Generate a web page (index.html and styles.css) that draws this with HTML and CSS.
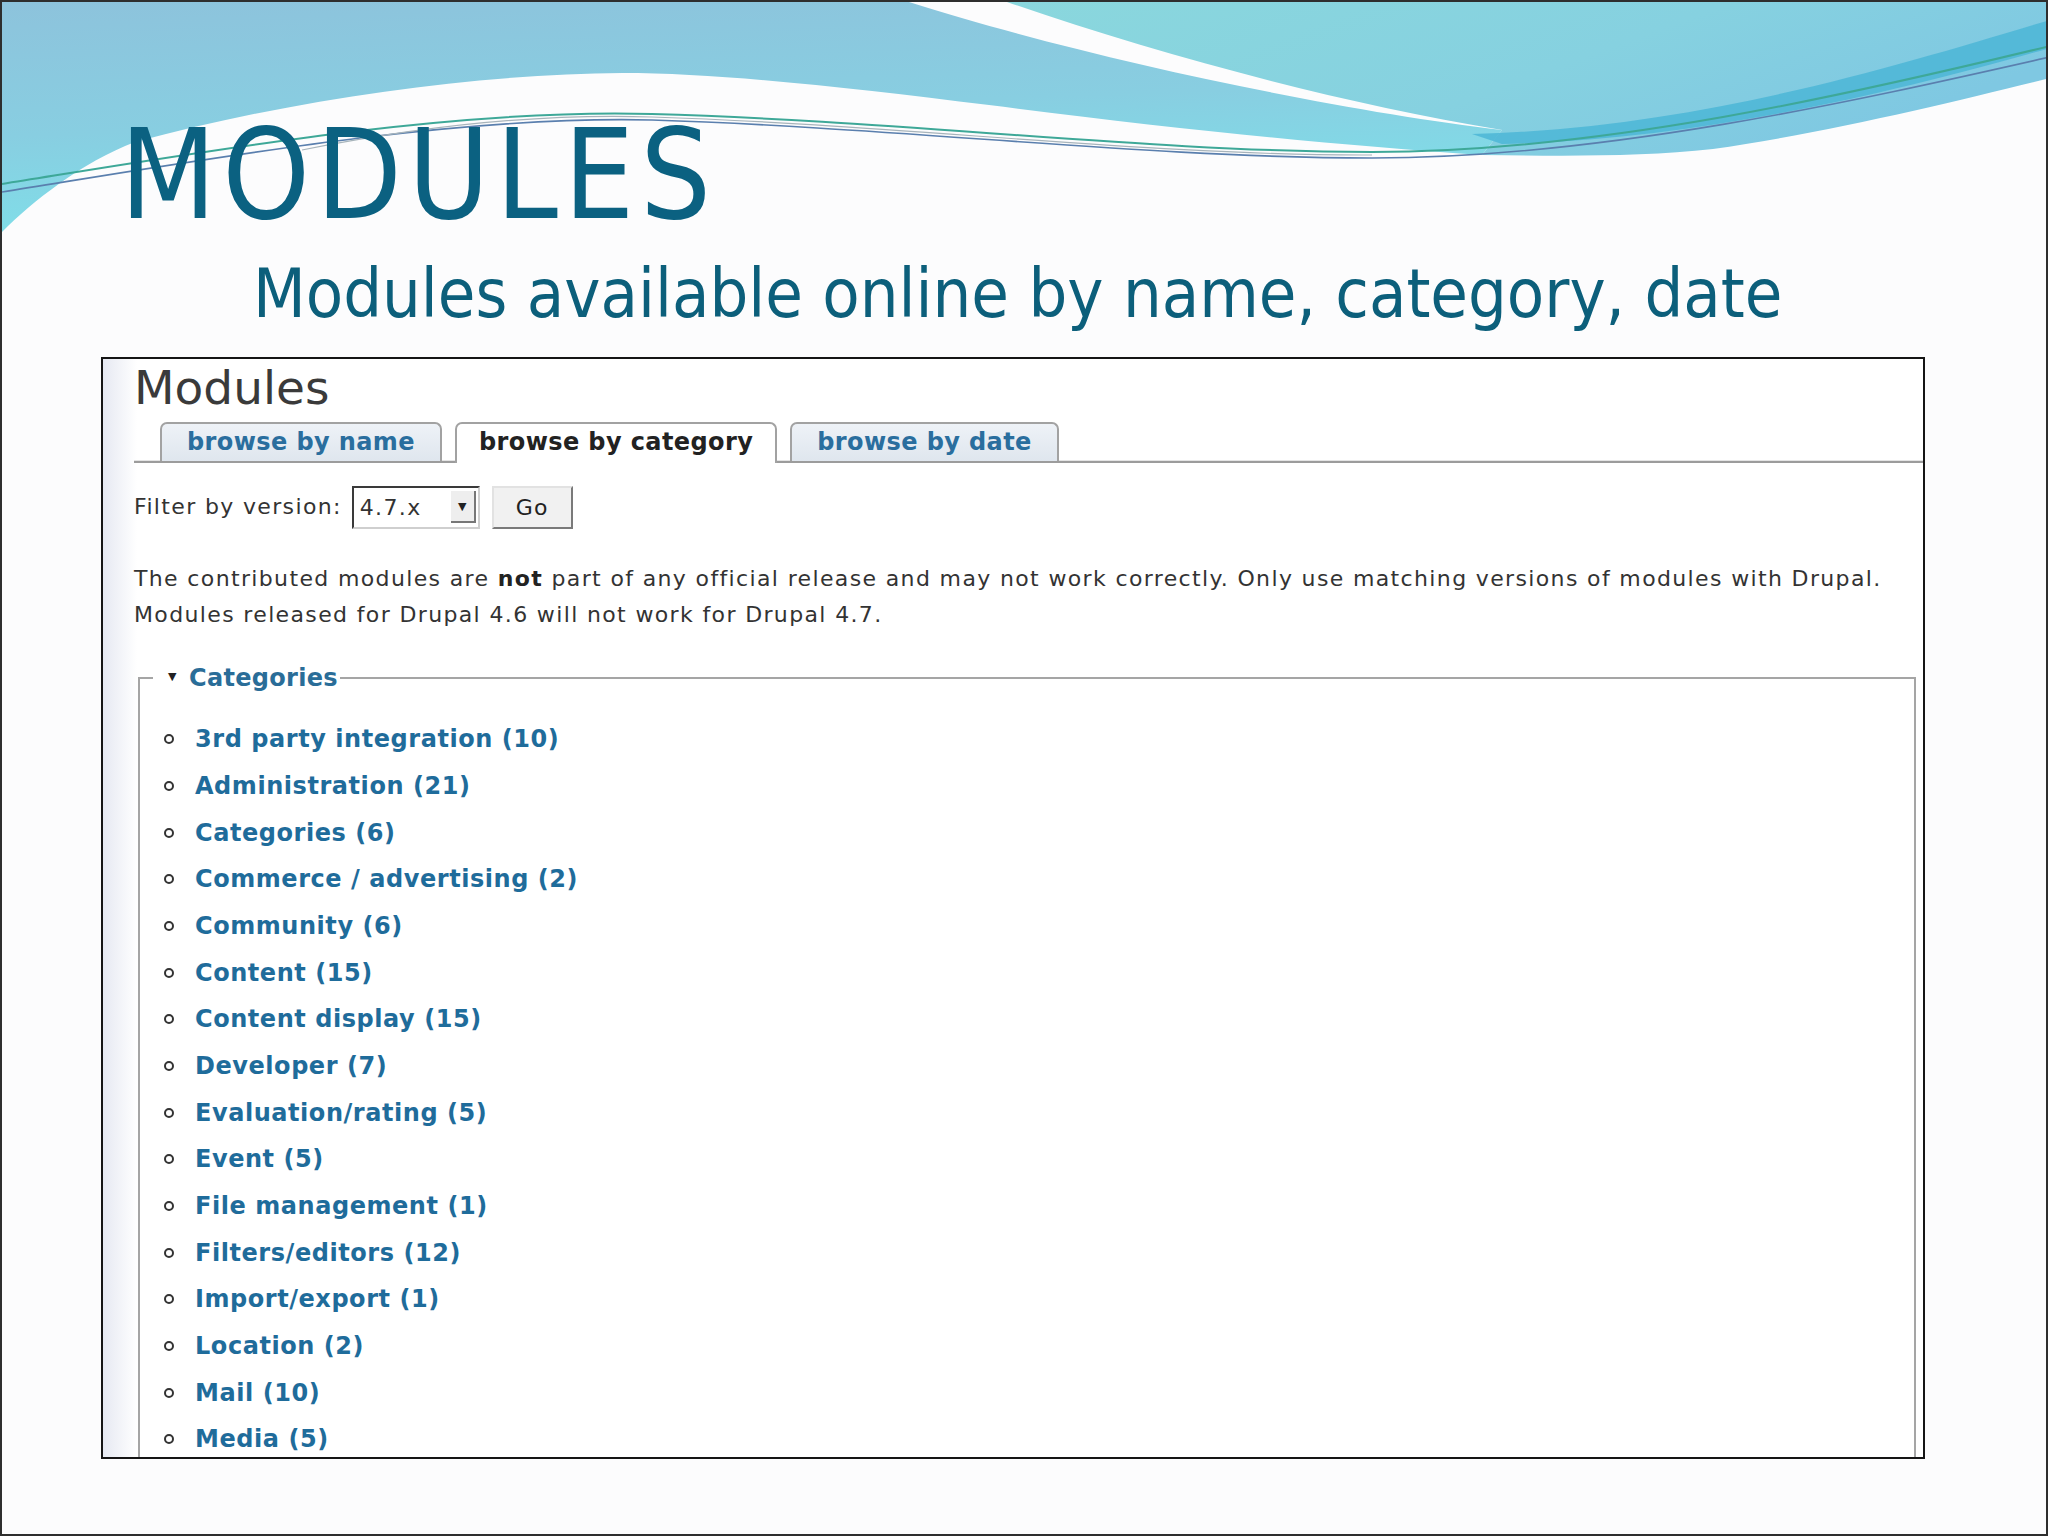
FILE: index.html
```html
<!DOCTYPE html>
<html lang="en">
<head>
<meta charset="utf-8">
<title>Modules</title>
<link rel="stylesheet" href="styles.css">
</head>
<body>
<div class="slide">
  <svg class="deco" width="2048" height="260" viewBox="0 0 2048 260" xmlns="http://www.w3.org/2000/svg" aria-hidden="true">
    <defs>
      <linearGradient id="gA" x1="0" y1="0" x2="0.25" y2="1">
        <stop offset="0" stop-color="#8dc3dc"/>
        <stop offset="0.55" stop-color="#88cee1"/>
        <stop offset="1" stop-color="#7fdfe9"/>
      </linearGradient>
      <linearGradient id="gB" x1="0" y1="0" x2="1" y2="0.4">
        <stop offset="0" stop-color="#8ad7dd"/>
        <stop offset="0.6" stop-color="#86d1e0"/>
        <stop offset="1" stop-color="#7fc8e2"/>
      </linearGradient>
    </defs>
    <path d="M0,0 L907,0 C1080,55 1330,108 1500,128 L1480,153 C1330,143 1173,127 987,103 C850,86 720,71 620,71 C480,72 300,95 133,140 C80,160 30,200 0,230 Z" fill="url(#gA)"/>
    <path d="M1005,0 L2048,0 L2048,76 C1960,98 1820,132 1711,147 C1640,155 1560,154 1480,153 L1500,128 C1330,100 1150,50 1005,0 Z" fill="url(#gB)"/>
    <path d="M1470,132 C1700,126 1900,62 2048,18 L2048,46 C1900,88 1700,138 1500,142 Z" fill="#4cb6d6" opacity="0.85"/>
    <path d="M0,182 C200,150 450,106 650,112 C900,119 1150,150 1370,150 C1600,150 1850,92 2048,44" fill="none" stroke="#3ea898" stroke-width="2"/>
    <path d="M0,190 C200,158 450,113 650,118 C900,126 1150,156 1370,156 C1600,156 1850,100 2048,55" fill="none" stroke="#5a7fae" stroke-width="1.6"/>
    <path d="M300,148 C450,118 560,112 650,115 C900,123 1150,154 1370,153" fill="none" stroke="#a7b4bb" stroke-width="1.2"/>
  </svg>

  <h1 class="title">MODULES</h1>
  <p class="subtitle">Modules available online by name, category, date</p>

  <div class="shot">
    <h2 class="page-title">Modules</h2>
    <ul class="tabs">
      <li class="tab">browse by name</li>
      <li class="tab active">browse by category</li>
      <li class="tab">browse by date</li>
    </ul>
    <div class="filter">
      <span class="filter-label">Filter by version:</span>
      <span class="select"><span class="select-value">4.7.x</span><span class="select-arrow">&#9660;</span></span>
      <span class="button">Go</span>
    </div>
    <p class="notice">The contributed modules are <strong>not</strong> part of any official release and may not work correctly. Only use matching versions of modules with Drupal.<br>Modules released for Drupal 4.6 will not work for Drupal 4.7.</p>
    <fieldset class="cats">
      <legend class="cats-legend"><span class="tri">&#9660;</span>Categories</legend>
      <ul class="cat-list">
        <li>3rd party integration (10)</li>
        <li>Administration (21)</li>
        <li>Categories (6)</li>
        <li>Commerce / advertising (2)</li>
        <li>Community (6)</li>
        <li>Content (15)</li>
        <li>Content display (15)</li>
        <li>Developer (7)</li>
        <li>Evaluation/rating (5)</li>
        <li>Event (5)</li>
        <li>File management (1)</li>
        <li>Filters/editors (12)</li>
        <li>Import/export (1)</li>
        <li>Location (2)</li>
        <li>Mail (10)</li>
        <li>Media (5)</li>
      </ul>
    </fieldset>
  </div>
</div>
</body>
</html>
```

FILE: styles.css
```css
html, body {
  margin: 0;
  padding: 0;
  background: #fcfcfd;
}

.slide {
  position: relative;
  width: 2048px;
  height: 1536px;
  box-sizing: border-box;
  border: 2px solid #2e2e2e;
  overflow: hidden;
  background: #fcfcfd;
  font-family: "DejaVu Sans Condensed", "DejaVu Sans", sans-serif;
}

.deco {
  position: absolute;
  left: 0;
  top: 0;
  z-index: 0;
}

.title {
  position: relative;
  z-index: 1;
  margin: 112px 0 0 0;
  padding-left: 118px;
  font-family: "DejaVu Sans Condensed", "DejaVu Sans", sans-serif;
  font-stretch: condensed;
  font-weight: normal;
  font-size: 124px;
  line-height: 123px;
  letter-spacing: 6px;
  color: #0b6181;
}

.subtitle {
  position: relative;
  z-index: 1;
  margin: 23px 0 0 0;
  padding-left: 251px;
  font-family: "DejaVu Sans Condensed", "DejaVu Sans", sans-serif;
  font-stretch: condensed;
  font-size: 68px;
  line-height: 67px;
  color: #0c5f7b;
}

.shot {
  position: relative;
  z-index: 1;
  margin: 30px 0 0 99px;
  width: 1824px;
  height: 1102px;
  box-sizing: border-box;
  border: 2px solid #151515;
  padding: 1px 7px 0 31px;
  overflow: hidden;
  background: linear-gradient(90deg, #e6e9f2 0, #ffffff 34px);
  font-family: "DejaVu Sans", Verdana, sans-serif;
  color: #333;
}

.page-title {
  margin: 0;
  font-weight: normal;
  font-size: 47px;
  line-height: 56px;
  color: #3a3a3a;
}

.tabs {
  display: flex;
  align-items: flex-end;
  gap: 13px;
  margin: 6px -7px 0 0;
  padding: 0 0 0 26px;
  list-style: none;
  border-bottom: 2px solid #9c9c9c;
  box-shadow: 0 -2px 0 -1px #e4e4e4 inset;
}

.tab {
  height: 37px;
  padding: 0 25px;
  border: 2px solid #a2a2a2;
  border-bottom: none;
  border-radius: 7px 7px 0 0;
  background: linear-gradient(#eef2f7, #dfe6ee);
  font-weight: bold;
  font-size: 24px;
  letter-spacing: 0.4px;
  line-height: 37px;
  color: #2a6e9e;
}

.tab.active {
  height: 39px;
  margin-bottom: -2px;
  padding: 0 22px;
  background: #ffffff;
  color: #222;
}

.filter {
  display: flex;
  align-items: center;
  height: 44px;
  margin-top: 22px;
  font-size: 22px;
  letter-spacing: 1.35px;
}

.filter-label {
  line-height: 26px;
  margin-right: 10px;
  color: #333;
}

.select {
  display: flex;
  align-items: center;
  justify-content: space-between;
  width: 128px;
  height: 43px;
  box-sizing: border-box;
  border-top: 2px solid #3a3a3a;
  border-left: 2px solid #3a3a3a;
  border-right: 2px solid #cfcfcf;
  border-bottom: 2px solid #cfcfcf;
  padding: 0 2px 0 6px;
  background: #fff;
  color: #333;
}

.select-arrow {
  display: flex;
  align-items: center;
  justify-content: center;
  width: 23px;
  height: 30px;
  background: #eeeeee;
  border-right: 2px solid #777;
  border-bottom: 2px solid #777;
  font-size: 11px;
  letter-spacing: 0;
  color: #222;
}

.button {
  display: flex;
  align-items: center;
  justify-content: center;
  width: 81px;
  height: 43px;
  box-sizing: border-box;
  margin-left: 12px;
  border-top: 2px solid #e2e2e2;
  border-left: 2px solid #e2e2e2;
  border-right: 2px solid #7a7a7a;
  border-bottom: 2px solid #7a7a7a;
  background: #f1f1f1;
  color: #222;
}

.notice {
  margin: 32px 0 0 0;
  font-size: 22px;
  letter-spacing: 1.36px;
  line-height: 36px;
  white-space: nowrap;
  color: #333;
}

.notice strong {
  color: #222;
}

.cats {
  margin: 30px 0 0 4px;
  padding: 0 0 40px 13px;
  border: 2px solid #a5a5a5;
  min-width: 0;
}

.cats-legend {
  padding: 0 2px 0 15px;
  font-weight: bold;
  font-size: 24px;
  line-height: 28px;
  letter-spacing: 0.3px;
  color: #2a6d98;
  background: #fff;
}

.tri {
  display: inline-block;
  width: 10px;
  margin-right: 11px;
  font-size: 11px;
  vertical-align: 6px;
  color: #222;
}

.cat-list {
  margin: 24px 0 0 0;
  padding: 0 0 0 11px;
  list-style: none;
}

.cat-list li {
  display: flex;
  align-items: center;
  height: 46.67px;
  font-weight: bold;
  font-size: 24px;
  letter-spacing: 0.55px;
  color: #1f6c9b;
}

.cat-list li::before {
  content: "";
  width: 6px;
  height: 6px;
  margin-right: 21px;
  border: 2px solid #333;
  border-radius: 50%;
  flex: none;
}
```
